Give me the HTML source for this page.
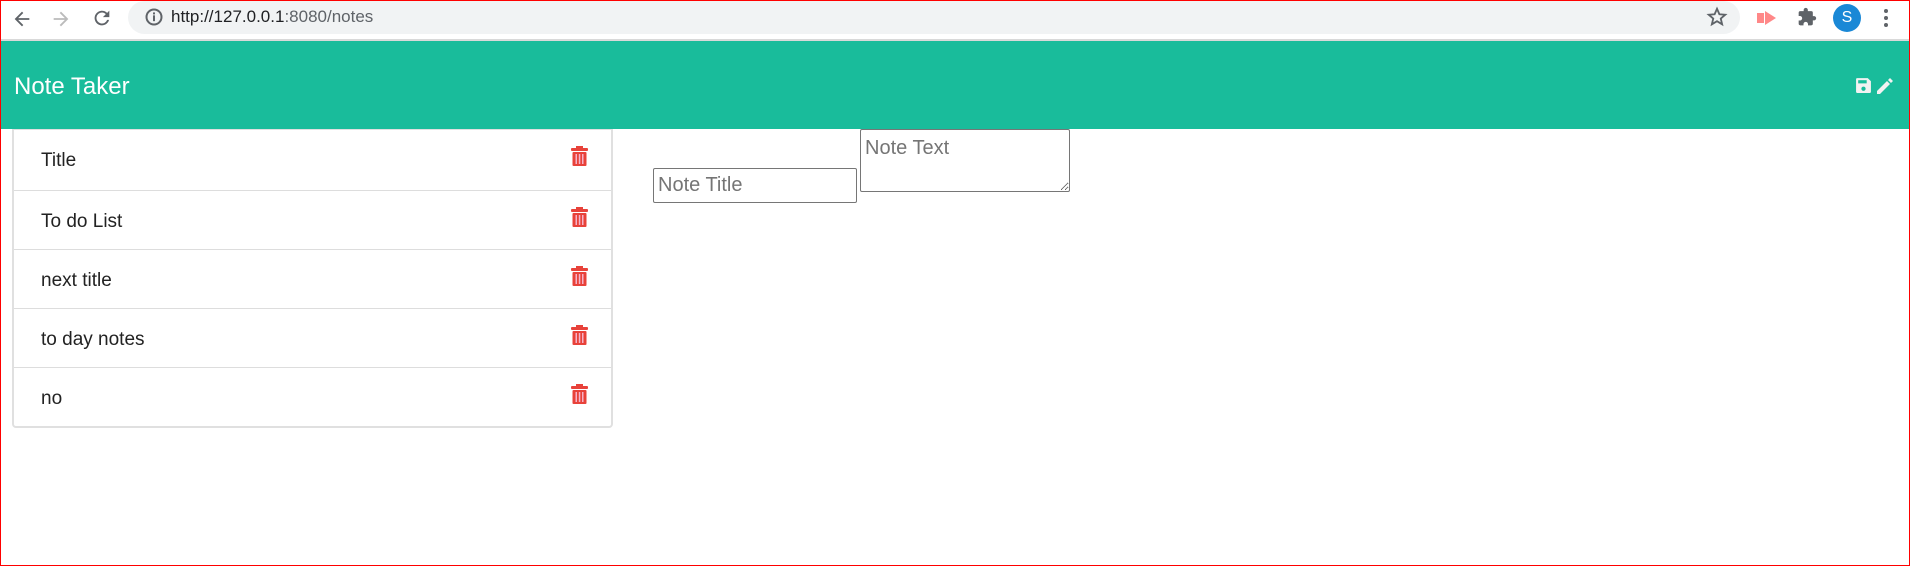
<!DOCTYPE html>
<html><head><style>
*{box-sizing:border-box;margin:0;padding:0}
body{width:1910px;height:566px;overflow:hidden;background:#fff;font-family:"Liberation Sans",sans-serif;position:relative}
.frame{position:absolute;inset:0;border:1px solid #f00;pointer-events:none;z-index:10}
.bar{position:absolute;left:0;top:0;width:1910px;height:39px;background:#fff}
.pill{position:absolute;left:128px;top:1px;width:1612px;height:33px;border-radius:17px;background:#f1f3f4}
.url{position:absolute;left:171px;top:7px;font-size:17px;color:#202124}
.url span{color:#5f6368}
.sep{position:absolute;top:39px;left:0;width:1910px;height:2px;background:#d9d9d9}
.hdr{position:absolute;top:41px;left:0;width:1910px;height:88px;background:#19bc9b}
.hdr h1{position:absolute;left:14px;top:32px;font-size:24px;font-weight:normal;color:#fff}
.list{position:absolute;left:12px;top:129px;width:601px;height:299px;border:2px solid #e0e0e0;border-top:1px solid #e0e0e0;border-radius:0 0 4px 4px;background:#fff}
.row{height:59.3px;border-bottom:1px solid #ddd;position:relative;font-size:19px;color:#222}
.row:first-child{height:60.5px}
.row:last-child{border-bottom:none}
.row span{position:absolute;left:27px;top:20px}
.row svg{position:absolute;left:557px;top:16px}
input{position:absolute;left:653px;top:168px;width:204px;height:35px;border:1px solid #767676;border-radius:2px;font-size:20px;padding-left:4px;font-family:"Liberation Sans",sans-serif}
textarea{position:absolute;left:860px;top:129px;width:210px;height:63px;border:1px solid #767676;border-radius:2px;font-size:20px;padding:7px 4px 3px;font-family:"Liberation Sans",sans-serif;resize:both}
::placeholder{color:#757575}
</style></head><body>
<div class="bar">
<svg style="position:absolute;left:11px;top:8px" width="22" height="22" viewBox="0 0 24 24"><path d="M20 11H7.8l5.6-5.6L12 4l-8 8 8 8 1.4-1.4L7.8 13H20z" fill="#5f6368"/></svg>
<svg style="position:absolute;left:50px;top:8px" width="22" height="22" viewBox="0 0 24 24"><path d="M4 11h12.2l-5.6-5.6L12 4l8 8-8 8-1.4-1.4 5.6-5.6H4z" fill="#bbb"/></svg>
<svg style="position:absolute;left:91px;top:7px" width="22" height="22" viewBox="0 0 24 24"><path d="M17.6 6.4A8 8 0 1 0 19.7 14h-2.1A6 6 0 1 1 12 6c1.7 0 3.1.7 4.2 1.8L13 11h7V4z" fill="#5f6368"/></svg>
<div class="pill"></div>
<svg style="position:absolute;left:144px;top:7px" width="20" height="20" viewBox="0 0 24 24"><circle cx="12" cy="12" r="9" fill="none" stroke="#5f6368" stroke-width="2.4"/><rect x="10.8" y="10" width="2.4" height="7" fill="#5f6368"/><rect x="10.8" y="6.5" width="2.4" height="2.4" fill="#5f6368"/></svg>
<div class="url">http://<b style="font-weight:normal;color:#202124">127.0.0.1</b><span>:8080/notes</span></div>
<svg style="position:absolute;left:1706px;top:6px" width="22" height="22" viewBox="0 0 24 24"><path d="M12 3l2.6 6 6.4.5-4.9 4.2 1.5 6.3L12 16.6 6.4 20l1.5-6.3L3 9.5 9.4 9z" fill="none" stroke="#5f6368" stroke-width="2"/></svg>
<svg style="position:absolute;left:1756px;top:9px" width="22" height="18" viewBox="0 0 22 18"><path d="M1 4h7v10H1zM9 2l11 7-11 7z" fill="#f88"/></svg>
<svg style="position:absolute;left:1797px;top:7px" width="20" height="20" viewBox="0 0 24 24"><path d="M20.5 11H19V7a2 2 0 0 0-2-2h-4V3.5a2.5 2.5 0 0 0-5 0V5H4a2 2 0 0 0-2 2v3.8h1.5a2.7 2.7 0 0 1 0 5.4H2V20a2 2 0 0 0 2 2h3.8v-1.5a2.7 2.7 0 0 1 5.4 0V22H17a2 2 0 0 0 2-2v-4h1.5a2.5 2.5 0 0 0 0-5z" fill="#5f6368"/></svg>
<div style="position:absolute;left:1833px;top:4px;width:28px;height:28px;border-radius:50%;background:#1a88d6;color:#fff;font-size:16px;text-align:center;line-height:28px">S</div>
<div style="position:absolute;left:1884px;top:9px;width:4px;height:4px;border-radius:2px;background:#5f6368;box-shadow:0 7px 0 #5f6368,0 14px 0 #5f6368"></div>
</div>
<div class="sep"></div>
<div class="hdr"><h1>Note Taker</h1>
<svg style="position:absolute;left:1855px;top:36px" width="17" height="17" viewBox="0 0 16 16"><path d="M1 2a1 1 0 0 1 1-1h10l3 3v10a1 1 0 0 1-1 1H2a1 1 0 0 1-1-1z" fill="#f2f2f2"/><rect x="3" y="3" width="8" height="3" fill="#19bc9b"/><circle cx="8" cy="11" r="2" fill="#19bc9b"/></svg>
<svg style="position:absolute;left:1875px;top:35px" width="20" height="20" viewBox="0 0 20 20"><path d="M2 15l10-10 3 3-10 10H2z M13 4l2-2 3 3-2 2z" fill="#f2f2f2"/></svg>
</div>
<div class="list">
<div class="row"><span>Title</span><svg width="17" height="20" viewBox="0 0 17 20"><rect x="0" y="2" width="17" height="3" rx="1" fill="#e8423a"/><rect x="5" y="0" width="7" height="3" fill="#e8423a"/><rect x="1.5" y="6" width="14" height="14" rx="1" fill="#e8423a"/><rect x="4.5" y="8" width="1.5" height="10" fill="#f6b2c8"/><rect x="7.8" y="8" width="1.5" height="10" fill="#f6b2c8"/><rect x="11" y="8" width="1.5" height="10" fill="#f6b2c8"/></svg></div>
<div class="row"><span>To do List</span><svg width="17" height="20" viewBox="0 0 17 20"><rect x="0" y="2" width="17" height="3" rx="1" fill="#e8423a"/><rect x="5" y="0" width="7" height="3" fill="#e8423a"/><rect x="1.5" y="6" width="14" height="14" rx="1" fill="#e8423a"/><rect x="4.5" y="8" width="1.5" height="10" fill="#f6b2c8"/><rect x="7.8" y="8" width="1.5" height="10" fill="#f6b2c8"/><rect x="11" y="8" width="1.5" height="10" fill="#f6b2c8"/></svg></div>
<div class="row"><span>next title</span><svg width="17" height="20" viewBox="0 0 17 20"><rect x="0" y="2" width="17" height="3" rx="1" fill="#e8423a"/><rect x="5" y="0" width="7" height="3" fill="#e8423a"/><rect x="1.5" y="6" width="14" height="14" rx="1" fill="#e8423a"/><rect x="4.5" y="8" width="1.5" height="10" fill="#f6b2c8"/><rect x="7.8" y="8" width="1.5" height="10" fill="#f6b2c8"/><rect x="11" y="8" width="1.5" height="10" fill="#f6b2c8"/></svg></div>
<div class="row"><span>to day notes</span><svg width="17" height="20" viewBox="0 0 17 20"><rect x="0" y="2" width="17" height="3" rx="1" fill="#e8423a"/><rect x="5" y="0" width="7" height="3" fill="#e8423a"/><rect x="1.5" y="6" width="14" height="14" rx="1" fill="#e8423a"/><rect x="4.5" y="8" width="1.5" height="10" fill="#f6b2c8"/><rect x="7.8" y="8" width="1.5" height="10" fill="#f6b2c8"/><rect x="11" y="8" width="1.5" height="10" fill="#f6b2c8"/></svg></div>
<div class="row"><span>no</span><svg width="17" height="20" viewBox="0 0 17 20"><rect x="0" y="2" width="17" height="3" rx="1" fill="#e8423a"/><rect x="5" y="0" width="7" height="3" fill="#e8423a"/><rect x="1.5" y="6" width="14" height="14" rx="1" fill="#e8423a"/><rect x="4.5" y="8" width="1.5" height="10" fill="#f6b2c8"/><rect x="7.8" y="8" width="1.5" height="10" fill="#f6b2c8"/><rect x="11" y="8" width="1.5" height="10" fill="#f6b2c8"/></svg></div>
</div>
<input placeholder="Note Title">
<textarea placeholder="Note Text"></textarea>
<div class="frame"></div>
</body></html>
